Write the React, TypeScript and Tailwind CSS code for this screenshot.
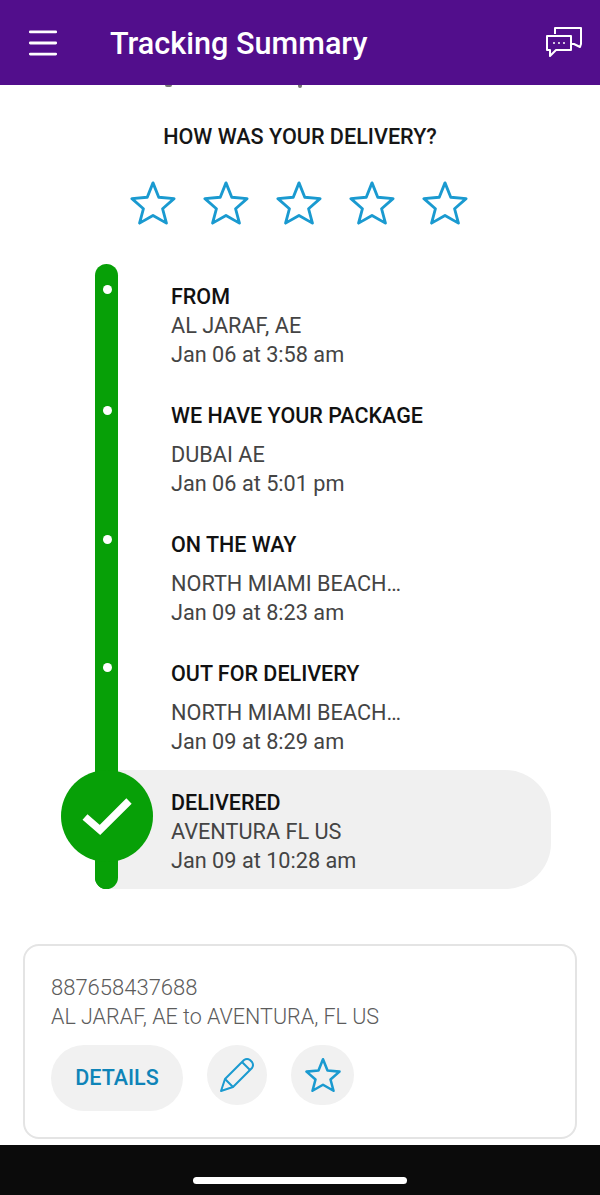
import { Menu } from 'lucide-react'

interface Stop {
  title: string
  place: string
  time: string
  gap: string
}

const stops: Stop[] = [
  { title: 'FROM', place: 'AL JARAF, AE', time: 'Jan 06 at 3:58 am', gap: 'mt-0' },
  { title: 'WE HAVE YOUR PACKAGE', place: 'DUBAI AE', time: 'Jan 06 at 5:01 pm', gap: 'mt-[10px]' },
  { title: 'ON THE WAY', place: 'NORTH MIAMI BEACH…', time: 'Jan 09 at 8:23 am', gap: 'mt-[10px]' },
  { title: 'OUT FOR DELIVERY', place: 'NORTH MIAMI BEACH…', time: 'Jan 09 at 8:29 am', gap: 'mt-[10px]' },
]

function Star({ size, stroke }: { size: number; stroke: number }) {
  return (
    <svg width={size} height={size} viewBox="0 0 48 48" fill="none" stroke="#1a9ad0" strokeWidth={stroke} strokeLinejoin="round">
      <path d="M24 3 L30 18 L46 19.5 L34 30 L38 45 L24 37 L10 45 L14 30 L2 19.5 L18 18 Z" />
    </svg>
  )
}

function ChatIcon() {
  return (
    <svg width="38" height="33" viewBox="0 0 38 33" fill="none" stroke="white" strokeWidth="2" strokeLinejoin="round">
      <path d="M10 8 V2 H36 V18 L35 21 L29 18 H25" />
      <path d="M2 10 H26 V24 H11 L5 30 V24 H2 Z" fill="#520e8c" />
      <circle cx="9" cy="17" r="0.6" fill="white" strokeWidth="1" />
      <circle cx="14" cy="17" r="0.6" fill="white" strokeWidth="1" />
      <circle cx="19" cy="17" r="0.6" fill="white" strokeWidth="1" />
    </svg>
  )
}

function PencilIcon() {
  return (
    <svg width="36" height="36" viewBox="0 0 36 36" fill="none" stroke="#1a9ad0" strokeWidth="2" strokeLinejoin="round">
      <path d="M2 34 L6 22 L25 3 Q28 1 31 3 L33 5 Q35 8 33 11 L14 30 Z" />
      <path d="M6 22 L14 30 M23 5 L31 13" />
    </svg>
  )
}

function StopText({ title, place, time, titleGap }: { title: string; place: string; time: string; titleGap: string }) {
  return (
    <div className="flex flex-col">
      <div className="text-[21.5px] leading-[29px] font-medium text-[#111111]">{title}</div>
      <div className={`text-[21.7px] leading-[29px] text-[#444444] ${titleGap}`}>{place}</div>
      <div className="text-[21.7px] leading-[29px] text-[#444444]">{time}</div>
    </div>
  )
}

export default function App() {
  return (
    <div className="w-[600px] h-[1195px] bg-white flex flex-col overflow-hidden font-['Roboto',sans-serif]">
      <header className="h-[85px] shrink-0 bg-[#520e8c] flex items-center pl-[24px] pr-[17px] text-white">
        <Menu size={38} strokeWidth={1.8} className="shrink-0" />
        <h1 className="ml-[48px] text-[30.6px] font-medium leading-none flex-1 pt-[4px]">Tracking Summary</h1>
        <ChatIcon />
      </header>

      {/* bits of the scrolled line that sticks out under the header */}
      <div className="relative h-0">
        <div className="absolute left-[165px] top-0 w-[7px] h-[2px] rounded-b-full bg-[#777777]" />
        <div className="absolute left-[298px] top-0 w-[4px] h-[3px] rounded-b-full bg-[#777777]" />
      </div>

      <div className="flex flex-col items-center mt-[38px]">
        <div className="text-[21.6px] leading-[28px] font-medium text-[#161616]">HOW WAS YOUR DELIVERY?</div>
        <div className="flex gap-[27px] mt-[29px] -ml-[2px]">
          {[0, 1, 2, 3, 4].map((i) => (
            <Star key={i} size={46} stroke={3} />
          ))}
        </div>
      </div>

      <section className="relative mt-[38px] h-[625px] pl-[171px] pt-[18px]">
        <div className="absolute left-[95px] top-0 w-[23px] h-full rounded-full bg-[#07a007]" />
        <div className="absolute left-[103px] top-[21px] w-[9px] h-[9px] rounded-full bg-white" />
        <div className="absolute left-[103px] top-[142px] w-[9px] h-[9px] rounded-full bg-white" />
        <div className="absolute left-[103px] top-[271px] w-[9px] h-[9px] rounded-full bg-white" />
        <div className="absolute left-[103px] top-[399px] w-[9px] h-[9px] rounded-full bg-white" />

        <div className="relative flex flex-col">
          {stops.map((s, i) => (
            <div key={s.title} className={i === 0 ? '' : 'mt-[32px]'}>
              <StopText title={s.title} place={s.place} time={s.time} titleGap={s.gap} />
            </div>
          ))}
        </div>

        <div className="absolute left-[107px] top-[506px] w-[444px] h-[119px] rounded-r-[46px] bg-[#f0f0f0] pl-[64px] pt-[18px]">
          <StopText title="DELIVERED" place="AVENTURA FL US" time="Jan 09 at 10:28 am" titleGap="mt-0" />
        </div>
        <div className="absolute left-[95px] top-[506px] w-[23px] h-[119px] rounded-b-full bg-[#07a007]" />
        <div className="absolute left-[61px] top-[506px] w-[92px] h-[92px] rounded-full bg-[#07a007] flex items-center justify-center">
          <svg width="52" height="42" viewBox="0 0 52 42" fill="none" stroke="white" strokeWidth="7.5">
            <path d="M4 22 L19 35 L48 6" />
          </svg>
        </div>
      </section>

      <section className="mt-[55px] mx-[23px] h-[195px] shrink-0 rounded-[16px] border-2 border-[#e4e4e4] pl-[26px] pt-[27px]">
        <div className="text-[22px] leading-[29px] text-[#5c5c5c] font-light">887658437688</div>
        <div className="text-[21.5px] leading-[29px] text-[#5c5c5c] font-light">AL JARAF, AE to AVENTURA, FL US</div>
        <div className="flex items-start mt-[14px]">
          <button className="w-[132px] h-[66px] rounded-full bg-[#f1f1f1] text-[21.5px] font-medium text-[#0f84b8]">DETAILS</button>
          <button className="ml-[24px] w-[60px] h-[60px] rounded-full bg-[#f1f1f1] flex items-center justify-center">
            <PencilIcon />
          </button>
          <button className="ml-[24px] w-[63px] h-[60px] rounded-full bg-[#f1f1f1] flex items-center justify-center">
            <Star size={36} stroke={3.4} />
          </button>
        </div>
      </section>

      <footer className="mt-[6px] flex-1 bg-[#0b0b0b] flex items-end justify-center pb-[11px]">
        <div className="w-[214px] h-[7px] rounded-full bg-white" />
      </footer>
    </div>
  )
}
